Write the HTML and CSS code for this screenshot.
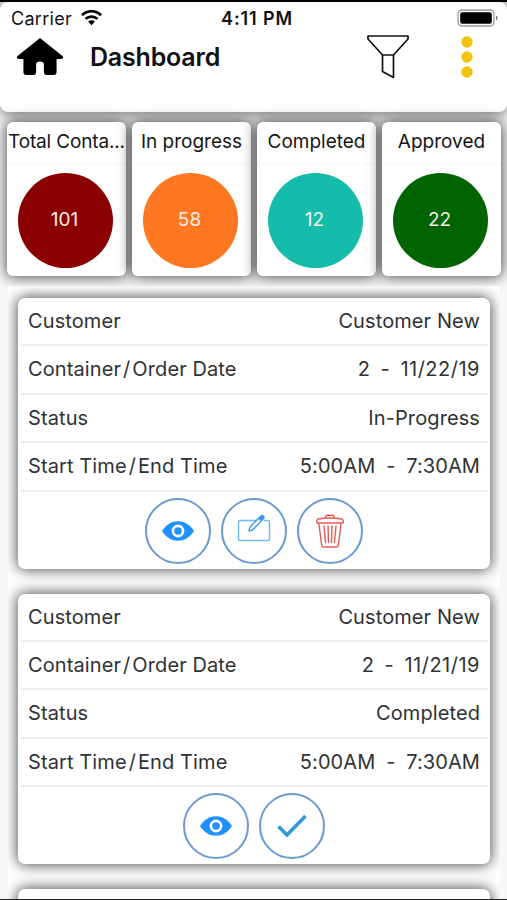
FILE: index.html
```html
<!DOCTYPE html>
<html lang="en">

<head>
    <meta charset="UTF-8">
    <meta name="viewport" content="width=device-width, initial-scale=1">
    <title>Dashboard</title>
    <link rel="stylesheet" href="styles.css">
</head>

<body>
    <header class="header">
        <div class="statusbar">
            <div class="carrier">
                <span>Carrier</span>
                <svg class="wifi" viewBox="0 0 22 16">
                    <path d="M1.500 5.200C7-.1 15-.1 20.500 5.200M5 8.900c3.400-3.100 8.600-3.100 12 0" fill="none" stroke="#000" stroke-width="2.600" />
                    <path d="M7.600 11.600c2-1.700 4.800-1.700 6.800 0L11 15.200z" />
                </svg>
            </div>
            <span class="clock">4:11 PM</span>
            <svg class="battery" viewBox="0 0 42 18">
                <rect x="1" y="1" width="36" height="16" rx="4" fill="#fff" stroke="#999" stroke-width="1.300" />
                <rect x="3.200" y="3.200" width="31.600" height="11.600" rx="2" />
                <path d="M39 6.500c2 .8 2 4.200 0 5z" fill="#777" />
            </svg>
        </div>
        <div class="toolbar">
            <svg class="home" viewBox="0 0 48 40">
                <path d="M24 1 47 19.500Q49 22 45.500 22.500H41V36q0 3-3 3h-7q-3 0-3-3V28q0-3-4-3t-4 3v8q0 3-3 3h-7q-3 0-3-3V22.500H2.500Q-1 22 1 19.500z" />
            </svg>
            <h1>Dashboard</h1>
            <svg class="filter" viewBox="0 0 44 46">
                <path d="M2 2h40v3L27.500 21h-11L2 5zM16.500 21h11v22.500l-11-6z" fill="none" stroke="#111" stroke-width="1.700" stroke-linejoin="round" />
            </svg>
            <svg class="more" viewBox="0 0 12 42">
                <circle cx="6" cy="6" r="5.700" />
                <circle cx="6" cy="21" r="5.700" />
                <circle cx="6" cy="36" r="5.700" />
            </svg>
        </div>
    </header>

    <section class="summary">
        <article class="tile">
            <h2 class="long">Total Conta...</h2>
            <p class="count total">101</p>
        </article>
        <article class="tile">
            <h2>In progress</h2>
            <p class="count progress">58</p>
        </article>
        <article class="tile">
            <h2>Completed</h2>
            <p class="count completed">12</p>
        </article>
        <article class="tile">
            <h2>Approved</h2>
            <p class="count approved">22</p>
        </article>
    </section>

    <main class="orders">
        <article class="order">
            <p class="row"><span>Customer</span><span>Customer New</span></p>
            <p class="row"><span>Container<i class="slash">/</i>Order Date</span><span class="date">2 - 11/22/19</span></p>
            <p class="row"><span>Status</span><span>In-Progress</span></p>
            <p class="row"><span>Start Time<i class="slash">/</i>End Time</span><span class="time">5:00AM - 7:30AM</span></p>
            <div class="actions">
                <button aria-label="View">
                    <svg class="eye" viewBox="0 0 32 20">
                        <path d="M0 10C8-3 24-3 32 10 24 23 8 23 0 10z" fill="#1e90ff" />
                        <circle cx="16" cy="10" r="5.100" fill="#1e90ff" stroke="#fff" stroke-width="2.600" />
                    </svg>
                </button>
                <button aria-label="Edit">
                    <svg class="edit" viewBox="0 0 34 30">
                        <path d="M22 7.500H3q-1.500 0-1.500 1.500v17q0 1.500 1.500 1.500h28q1.500 0 1.500-1.500V9q0-1.500-1.500-1.500h-4" fill="none" stroke="#73b8f1" stroke-width="1.500" />
                        <path d="M12.600 14.500 12 17.800l3.600-.8L26.600 5.600q1-1.600-.2-2.600t-2.600 0z" fill="#fff" stroke="#3597ed" stroke-width="1.300" stroke-linejoin="round" />
                        <path d="M21.200 5.400 23.800 3q1.400-1 2.600 0t.2 2.600L24 8.200z" fill="#3597ed" />
                    </svg>
                </button>
                <button aria-label="Delete">
                    <svg class="trash" viewBox="0 0 28 34" fill="none" stroke="#e35b55" stroke-width="1.400" stroke-linejoin="round" stroke-linecap="round">
                        <path d="M2 5q12-2 24 0 2 2 1 4H1Q0 7 2 5zM9.500 4.200q0-3 2-3h5q2 0 2 3M2.800 9l2.800 22q.2 2 2 2h12.800q1.800 0 2-2L25.200 9M8 12l1.600 16.500M12 12l.6 16.500M16 12l-.6 16.500M20 12l-1.600 16.500" />
                    </svg>
                </button>
            </div>
        </article>

        <article class="order">
            <p class="row"><span>Customer</span><span>Customer New</span></p>
            <p class="row"><span>Container<i class="slash">/</i>Order Date</span><span class="date">2 - 11/21/19</span></p>
            <p class="row"><span>Status</span><span>Completed</span></p>
            <p class="row"><span>Start Time<i class="slash">/</i>End Time</span><span class="time">5:00AM - 7:30AM</span></p>
            <div class="actions">
                <button aria-label="View">
                    <svg class="eye" viewBox="0 0 32 20">
                        <path d="M0 10C8-3 24-3 32 10 24 23 8 23 0 10z" fill="#1e90ff" />
                        <circle cx="16" cy="10" r="5.100" fill="#1e90ff" stroke="#fff" stroke-width="2.600" />
                    </svg>
                </button>
                <button aria-label="Approve">
                    <svg class="check" viewBox="0 0 30 24">
                        <path d="M1.500 12.500 10 21 28.500 2" fill="none" stroke="#3498db" stroke-width="3.600" />
                    </svg>
                </button>
            </div>
        </article>

        <article class="order"></article>
    </main>
</body>

</html>
```
FILE: styles.css
```css
* {
    box-sizing: border-box;
    margin: 0;
}

body {
    height: 900px;
    overflow: hidden;
    display: flex;
    flex-direction: column;
    border-top: 2px solid #000;
    border-bottom: 1px solid #222;
    background-color: #f7f7f7;
    font-family: Inter, "Liberation Sans", sans-serif;
    color: #303234;
}

svg {
    display: block;
    flex: none;
}

.header {
    height: 110px;
    flex: none;
    border-radius: 8px;
    background-color: #fff;
    box-shadow: 0 0 14px 1px rgba(0, 0, 0, 0.6);
    color: #111;
}

.statusbar {
    display: grid;
    grid-template-columns: 1fr auto 1fr;
    align-items: center;
    height: 32px;
    padding: 0 8px 0 11px;
}

.carrier {
    display: flex;
    align-items: center;
    gap: 8px;
    font-size: 18px;
    letter-spacing: 0.3px;
}

.wifi {
    width: 23px;
    height: 16px;
}

.clock {
    margin-left: 4px;
    font-size: 18px;
    font-weight: 600;
    letter-spacing: 0.9px;
}

.battery {
    width: 42px;
    height: 18px;
    justify-self: end;
}

.toolbar {
    display: flex;
    align-items: center;
    height: 45px;
    padding: 0 34px 0 16px;
}

.home {
    width: 48px;
    height: 39px;
}

h1 {
    flex: 1;
    margin-left: 26px;
    font-size: 25px;
    font-weight: 600;
    letter-spacing: -0.2px;
}

.filter {
    width: 44px;
    height: 46px;
    margin-right: 51px;
}

.more {
    width: 12px;
    height: 42px;
    fill: #f1c40f;
}

.summary {
    display: grid;
    grid-template-columns: repeat(4, 119px);
    gap: 6px;
    height: 174px;
    flex: none;
    padding: 10px 0 10px 7px;
}

.tile {
    height: 154px;
    border-radius: 6px;
    background-color: #fff;
    box-shadow: 0 0 14px 1px rgba(0, 0, 0, 0.7);
}

.tile h2 {
    height: 42px;
    border-bottom: 1px solid #f5f5f5;
    white-space: nowrap;
    text-align: center;
    font-size: 19px;
    font-weight: 400;
    line-height: 40px;
    color: #151515;
}

.tile .long {
    letter-spacing: -0.15px;
}

.count {
    width: 95px;
    height: 95px;
    margin: 9px 0 0 11px;
    padding-right: 2px;
    border-radius: 50%;
    text-align: center;
    font-size: 19px;
    line-height: 94px;
    color: #f6eee8;
}

.total {
    background-color: #8b0000;
}

.progress {
    background-color: #ff7720;
}

.completed {
    background-color: #16bcaa;
}

.approved {
    background-color: #006400;
}

.orders {
    display: flex;
    flex-direction: column;
    gap: 25px;
    flex: 1;
    min-height: 0;
    margin: 0 7px 0 8px;
    padding: 12px 10px 0;
    overflow: hidden;
    background-color: #fff;
}

.order {
    flex: none;
    height: 270.5px;
    border-radius: 7px;
    background-color: #fff;
    box-shadow: 0 0 14px 1px rgba(0, 0, 0, 0.7);
}

.row {
    display: flex;
    align-items: center;
    justify-content: space-between;
    height: 48.5px;
    margin: 0 2px;
    padding: 0 8px;
    border-bottom: 2px solid #efefef;
    font-size: 20px;
    letter-spacing: 0.1px;
}

.row:first-child {
    height: 48px;
}

.slash {
    margin: 0 2px;
    font-style: normal;
}

.date {
    letter-spacing: 0.5px;
    word-spacing: 4px;
}

.time {
    word-spacing: 5px;
}

.actions {
    display: flex;
    justify-content: center;
    gap: 10px;
    padding-top: 6px;
}

.actions button {
    display: flex;
    align-items: center;
    justify-content: center;
    width: 66px;
    height: 66px;
    padding: 0;
    border: 2px solid #6a9ad0;
    border-radius: 50%;
    background: none;
    cursor: pointer;
}

.eye {
    width: 32px;
    height: 20px;
}

.edit {
    width: 34px;
    height: 30px;
    margin-bottom: 6px;
}

.trash {
    width: 28px;
    height: 34px;
}

.check {
    width: 30px;
    height: 24px;
}
```
